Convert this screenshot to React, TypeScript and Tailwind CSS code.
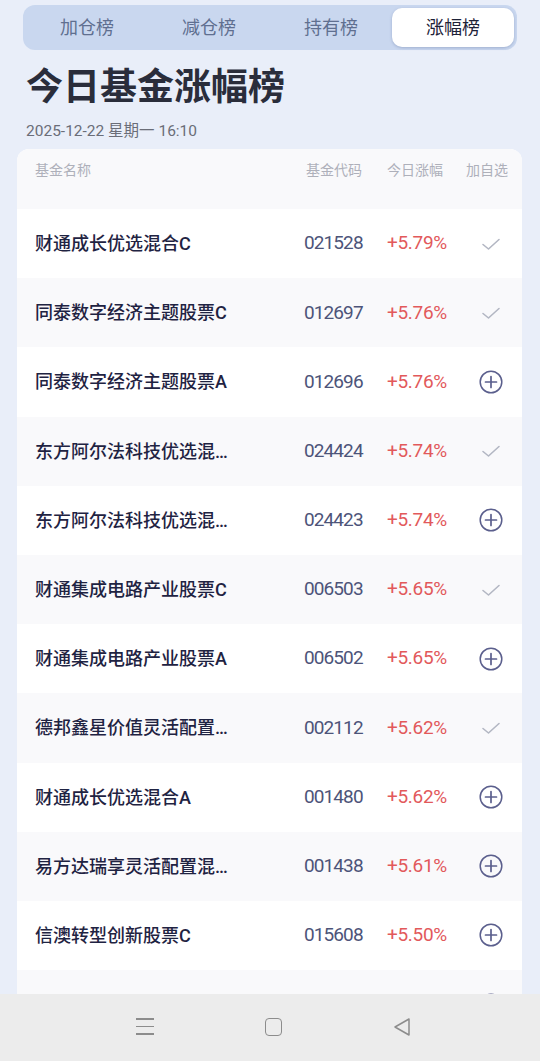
import React from "react";

type Row = { name: string; code: string; pct: string; added: boolean };

const rows: Row[] = [
  { name: "财通成长优选混合C", code: "021528", pct: "+5.79%", added: true },
  { name: "同泰数字经济主题股票C", code: "012697", pct: "+5.76%", added: true },
  { name: "同泰数字经济主题股票A", code: "012696", pct: "+5.76%", added: false },
  { name: "东方阿尔法科技优选混合发起C", code: "024424", pct: "+5.74%", added: true },
  { name: "东方阿尔法科技优选混合发起A", code: "024423", pct: "+5.74%", added: false },
  { name: "财通集成电路产业股票C", code: "006503", pct: "+5.65%", added: true },
  { name: "财通集成电路产业股票A", code: "006502", pct: "+5.65%", added: false },
  { name: "德邦鑫星价值灵活配置混合A", code: "002112", pct: "+5.62%", added: true },
  { name: "财通成长优选混合A", code: "001480", pct: "+5.62%", added: false },
  { name: "易方达瑞享灵活配置混合E", code: "001438", pct: "+5.61%", added: false },
  { name: "信澳转型创新股票C", code: "015608", pct: "+5.50%", added: false },
  { name: "信澳转型创新股票A", code: "015607", pct: "+5.49%", added: false },
];

const FONT = 'Roboto, "Noto Sans CJK SC", sans-serif';

function Check() {
  return (
    <svg width="20" height="14" viewBox="0 0 20 14" fill="none">
      <path d="M2 7.5 L7.5 12 L18 2.5" stroke="#b3b7c3" strokeWidth="1.6" strokeLinecap="round" strokeLinejoin="round" />
    </svg>
  );
}

function PlusCircle() {
  return (
    <svg width="24" height="24" viewBox="0 0 24 24" fill="none">
      <circle cx="12" cy="12" r="10.8" stroke="#5b5f8d" strokeWidth="1.5" />
      <path d="M12 6.5 V17.5 M6.5 12 H17.5" stroke="#5b5f8d" strokeWidth="1.7" strokeLinecap="round" />
    </svg>
  );
}

export default function App() {
  const tabs = ["加仓榜", "减仓榜", "持有榜", "涨幅榜"];
  return (
    <div className="relative h-[1061px] w-[540px] overflow-hidden bg-[#e9eef9]" style={{ fontFamily: FONT }}>
      {/* Tabs */}
      <div className="mx-[23px] mt-[5px] flex h-[45px] items-center rounded-[12px] bg-[#c9d7ef] px-[3px]">
        {tabs.map((t, i) => (
          <div
            key={t}
            className={
              i === 3
                ? "flex h-[39px] flex-1 items-center justify-center rounded-[10px] bg-white text-[18px] text-[#1d2238] shadow-[0_1px_3px_rgba(80,100,150,0.35)]"
                : "flex h-[39px] flex-1 items-center justify-center text-[18px] text-[#5f6f90]"
            }
          >
            {t}
          </div>
        ))}
      </div>

      {/* Title */}
      <div className="ml-[26px] mt-[14px] text-[37px] font-bold leading-[48px] text-[#2a2d3b]">今日基金涨幅榜</div>
      <div className="ml-[26px] mt-[9px] text-[15.5px] leading-[20px] text-[#6a6d78]">2025-12-22 星期一 16:10</div>

      {/* Card */}
      <div className="ml-[17px] mr-[18px] mt-[8px] overflow-hidden rounded-t-[12px] bg-white">
        <div className="flex h-[60px] items-start bg-[#f9f9fb] pt-[11px] text-[14px] leading-[20px] text-[#aeb0ba]">
          <div className="flex-1 pl-[18px]">基金名称</div>
          <div className="w-[83px] pl-[2px]">基金代码</div>
          <div className="w-[79px]">今日涨幅</div>
          <div className="w-[56px]">加自选</div>
        </div>
        {rows.map((r, i) => (
          <div key={r.code} className={`flex h-[69.2px] items-center ${i % 2 === 1 ? "bg-[#f9f9fb]" : "bg-white"}`}>
            <div className="min-w-0 flex-1 pl-[18px] pr-[64px]">
              <div className="truncate text-[18px] font-medium text-[#1f2342]">{r.name}</div>
            </div>
            <div className="w-[83px] text-[19px] tracking-[-0.9px] text-[#4d5479]">{r.code}</div>
            <div className="w-[74px] text-[19px] tracking-[-0.3px] text-[#e2595b]">{r.pct}</div>
            <div className="flex w-[61px] justify-center pr-[2px]">{r.added ? <Check /> : <PlusCircle />}</div>
          </div>
        ))}
      </div>

      {/* Nav bar */}
      <div className="absolute bottom-0 left-0 flex h-[67px] w-full items-center bg-[#ececec]">
        <div className="absolute left-[136px] top-[24px] flex w-[18px] flex-col gap-[6px]">
          <div className="h-[1.5px] bg-[#8c8c8c]" />
          <div className="h-[1.5px] bg-[#8c8c8c]" />
          <div className="h-[1.5px] bg-[#8c8c8c]" />
        </div>
        <div className="absolute left-[265px] top-[24px] h-[18px] w-[17px] rounded-[4px] border-[1.5px] border-[#8c8c8c]" />
        <svg className="absolute left-[393px] top-[23px]" width="18" height="20" viewBox="0 0 18 20" fill="none">
          <path d="M16 2 L2 10 L16 18 Z" stroke="#8c8c8c" strokeWidth="1.5" strokeLinejoin="round" />
        </svg>
      </div>
    </div>
  );
}
